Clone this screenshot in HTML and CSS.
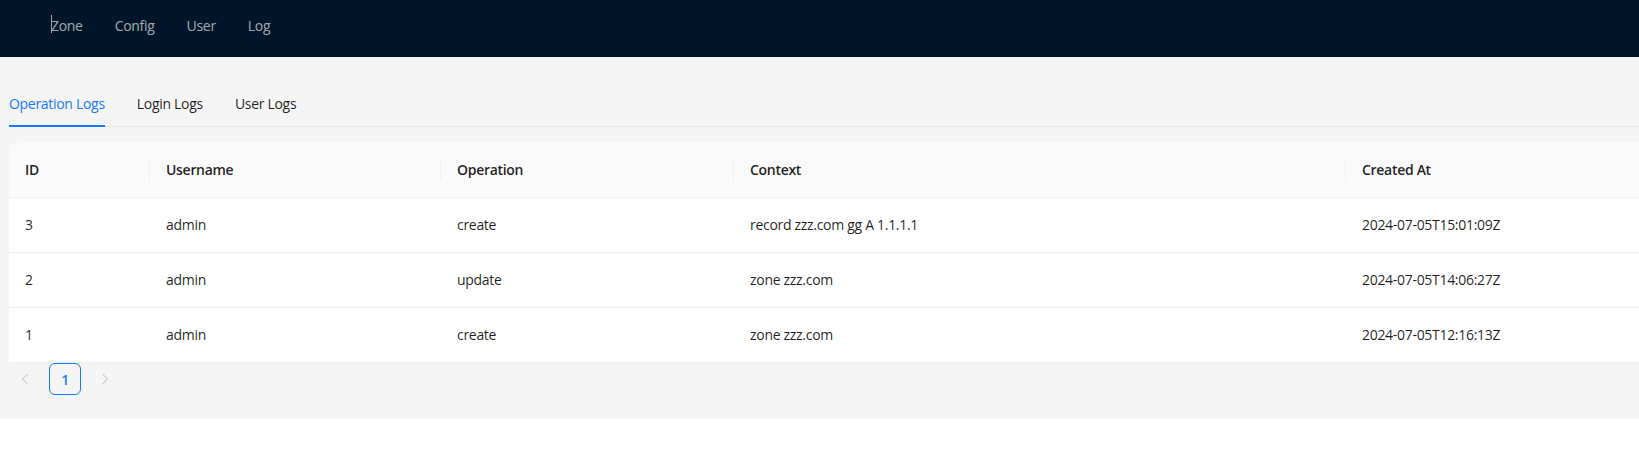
FILE: index.html
```html
<!DOCTYPE html>
<html lang="en">
<head>
<meta charset="utf-8">
<title>Logs</title>
<link rel="stylesheet" href="styles.css">
</head>
<body>
<div class="layout">
  <header class="header">
    <nav class="menu">
      <a class="menu-item">Zone</a>
      <a class="menu-item">Config</a>
      <a class="menu-item">User</a>
      <a class="menu-item">Log</a>
    </nav>
    <span class="cursor"></span>
  </header>
  <main class="content">
    <div class="panel">
      <div class="tabs">
        <div class="tab active">Operation Logs</div>
        <div class="tab">Login Logs</div>
        <div class="tab">User Logs</div>
      </div>
      <table class="table">
        <colgroup>
          <col class="c-id"><col class="c-user"><col class="c-op"><col class="c-ctx"><col class="c-at">
        </colgroup>
        <thead>
          <tr>
            <th><span class="th-in">ID</span></th>
            <th><span class="th-in">Username</span></th>
            <th><span class="th-in">Operation</span></th>
            <th><span class="th-in">Context</span></th>
            <th class="last">Created At</th>
          </tr>
        </thead>
        <tbody>
          <tr><td>3</td><td>admin</td><td>create</td><td>record zzz.com gg A 1.1.1.1</td><td>2024-07-05T15:01:09Z</td></tr>
          <tr><td>2</td><td>admin</td><td>update</td><td>zone zzz.com</td><td>2024-07-05T14:06:27Z</td></tr>
          <tr><td>1</td><td>admin</td><td>create</td><td>zone zzz.com</td><td>2024-07-05T12:16:13Z</td></tr>
        </tbody>
      </table>
      <div class="pagination">
        <span class="pg-arrow"><svg width="12" height="12" viewBox="0 0 12 12"><path d="M8.5 1 L3.5 6 L8.5 11" fill="none" stroke="currentColor" stroke-width="1"/></svg></span>
        <span class="pg-item active">1</span>
        <span class="pg-arrow"><svg width="12" height="12" viewBox="0 0 12 12"><path d="M3.5 1 L8.5 6 L3.5 11" fill="none" stroke="currentColor" stroke-width="1"/></svg></span>
      </div>
    </div>
  </main>
</div>
</body>
</html>
```

FILE: styles.css
```css
* { box-sizing: border-box; }
html, body { margin: 0; padding: 0; background: #fff; overflow: hidden; }
body {
  font-family: "Open Sans", "Noto Sans", "Liberation Sans", sans-serif;
  font-size: 14px;
  letter-spacing: -0.3px;
  color: rgba(0,0,0,0.88);
}
.layout { background: #f5f5f5; }
.header {
  position: relative;
  height: 57px;
  background: #001529;
  padding: 15px 0 0 35px;
}
.menu { display: flex; }
.menu-item {
  padding: 0 16px;
  line-height: 22px;
  color: rgba(255,255,255,0.65);
}
.cursor {
  position: absolute;
  left: 51px;
  top: 15px;
  width: 1px;
  height: 18px;
  background: #9aa3ad;
}
.content {
  padding: 24px 0 24px 9px;
  overflow: hidden;
}
.panel { width: 1700px; }
.tabs {
  display: flex;
  gap: 32px;
  border-bottom: 1px solid #e7e7e7;
  margin-bottom: 16px;
}
.tab {
  padding: 12px 0 10px;
  line-height: 22px;
  border-bottom: 2px solid transparent;
  margin-bottom: -1px;
}
.tab.active { color: #1677ff; border-bottom-color: #1677ff; }
.table {
  width: 100%;
  border-collapse: separate;
  border-spacing: 0;
  table-layout: fixed;
}
.c-id { width: 141px; }
.c-user { width: 291px; }
.c-op { width: 293px; }
.c-ctx { width: 612px; }
th, td {
  text-align: left;
  padding: 16px;
  line-height: 22px;
  border-bottom: 1px solid #f0f0f0;
  white-space: nowrap;
}
th {
  background: #fafafa;
  font-weight: 600;
  position: relative;
}
th:first-child { border-top-left-radius: 8px; }
.th-in { display: block; }
th:not(.last)::after {
  content: "";
  position: absolute;
  right: 0;
  top: 50%;
  width: 1px;
  height: 22px;
  margin-top: -11px;
  background: #f0f0f0;
}
td { background: #fff; }
.pagination {
  display: flex;
  gap: 8px;
}
.pg-arrow, .pg-item {
  width: 32px;
  height: 32px;
  display: flex;
  align-items: center;
  justify-content: center;
  border-radius: 6px;
}
.pg-arrow { color: rgba(0,0,0,0.25); }
.pg-item.active {
  border: 1px solid #1677ff;
  color: #1677ff;
  font-weight: 600;
}
```
